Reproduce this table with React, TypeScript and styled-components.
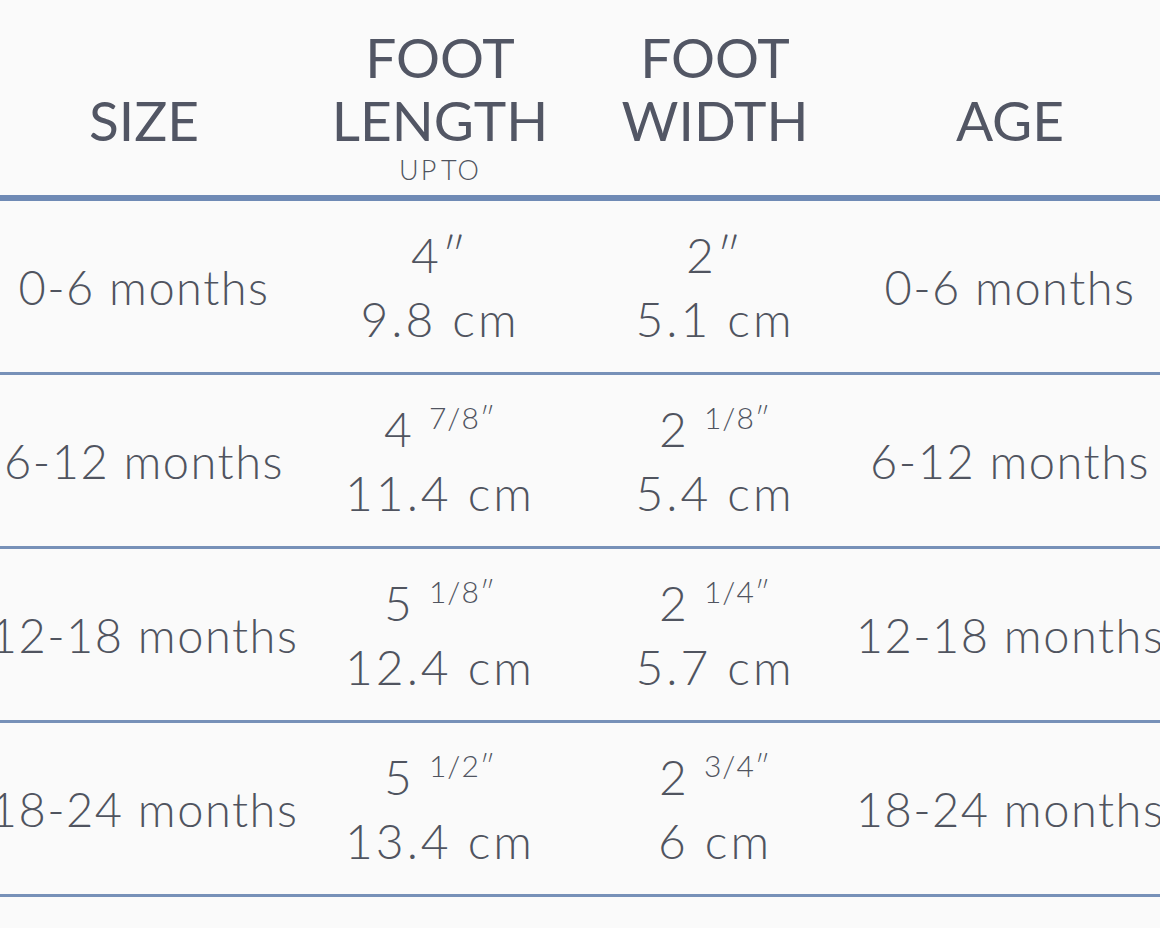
import styled, { createGlobalStyle } from "styled-components";

const GlobalStyle = createGlobalStyle`
  html, body {
    margin: 0;
    padding: 0;
    background: #fafafa;
  }
  body {
    font-family: Lato, "Open Sans", "DejaVu Sans", sans-serif;
    font-weight: 300;
    color: #50545f;
  }
`;

type Measure = { whole: string; frac?: string; cm: string };

const rows: { size: string; length: Measure; width: Measure; age: string }[] = [
  {
    size: "0-6 months",
    length: { whole: "4″", cm: "9.8 cm" },
    width: { whole: "2″", cm: "5.1 cm" },
    age: "0-6 months",
  },
  {
    size: "6-12 months",
    length: { whole: "4", frac: "7/8″", cm: "11.4 cm" },
    width: { whole: "2", frac: "1/8″", cm: "5.4 cm" },
    age: "6-12 months",
  },
  {
    size: "12-18 months",
    length: { whole: "5", frac: "1/8″", cm: "12.4 cm" },
    width: { whole: "2", frac: "1/4″", cm: "5.7 cm" },
    age: "12-18 months",
  },
  {
    size: "18-24 months",
    length: { whole: "5", frac: "1/2″", cm: "13.4 cm" },
    width: { whole: "2", frac: "3/4″", cm: "6 cm" },
    age: "18-24 months",
  },
];

const COLS = "288px 304px 246px 344px";

const Page = styled.div`
  width: 1160px;
  height: 928px;
  overflow: hidden;
  background: #fafafa;
`;

const HeadRow = styled.div`
  display: grid;
  grid-template-columns: ${COLS};
  height: 195px;
  border-bottom: 6px solid #6f8ab5;
`;

const HeadCell = styled.div`
  display: flex;
  flex-direction: column;
  align-items: center;
  padding-top: 26px;
`;

const HeadTitle = styled.div`
  height: 126px;
  display: flex;
  flex-direction: column;
  justify-content: flex-end;
  align-items: center;
  font-size: 55px;
  font-weight: 400;
  line-height: 63px;
  color: #525664;
  white-space: nowrap;
`;

const HeadSub = styled.div`
  font-size: 27px;
  line-height: 36px;
  letter-spacing: 2px;
  word-spacing: -5px;
`;

const Row = styled.div`
  display: grid;
  grid-template-columns: ${COLS};
  height: 171px;
  border-bottom: 3px solid #7791b8;
`;

const Cell = styled.div<{ $spacing: number; $size: number }>`
  display: flex;
  flex-direction: column;
  align-items: center;
  justify-content: center;
  font-size: ${({ $size }) => $size}px;
  line-height: 64px;
  letter-spacing: ${({ $spacing }) => $spacing}px;
  white-space: nowrap;
`;

const Line = styled.div`
  display: flex;
  align-items: flex-start;
  justify-content: center;
`;

const Frac = styled.span`
  font-size: 30px;
  line-height: 40px;
  letter-spacing: 1px;
  margin-left: 14px;
`;

const MeasureCell = ({ m }: { m: Measure }) => (
  <Cell $spacing={3} $size={48}>
    <Line>
      {m.whole}
      {m.frac && <Frac>{m.frac}</Frac>}
    </Line>
    <Line>{m.cm}</Line>
  </Cell>
);

export default function App() {
  return (
    <Page>
      <GlobalStyle />
      <HeadRow>
        <HeadCell>
          <HeadTitle>SIZE</HeadTitle>
        </HeadCell>
        <HeadCell>
          <HeadTitle>
            <div>FOOT</div>
            <div>LENGTH</div>
          </HeadTitle>
          <HeadSub>UP TO</HeadSub>
        </HeadCell>
        <HeadCell>
          <HeadTitle>
            <div>FOOT</div>
            <div>WIDTH</div>
          </HeadTitle>
        </HeadCell>
        <HeadCell>
          <HeadTitle>AGE</HeadTitle>
        </HeadCell>
      </HeadRow>
      {rows.map((r) => (
        <Row key={r.size}>
          <Cell $spacing={1.5} $size={47}>{r.size}</Cell>
          <MeasureCell m={r.length} />
          <MeasureCell m={r.width} />
          <Cell $spacing={1.5} $size={47}>{r.age}</Cell>
        </Row>
      ))}
    </Page>
  );
}
